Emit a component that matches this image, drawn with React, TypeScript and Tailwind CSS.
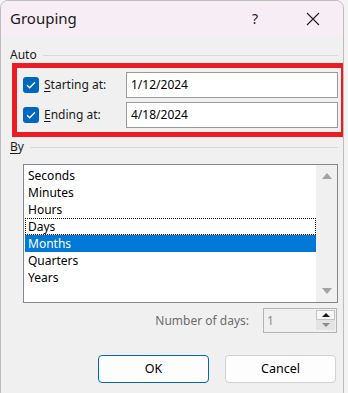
const font = { fontFamily: '"Segoe UI", "Noto Sans", "Liberation Sans", sans-serif' };

function Check() {
  return (
    <div className="w-[16px] h-[16px] rounded-[3px] bg-[#0067c0] flex items-center justify-center shrink-0">
      <svg width="10" height="8" viewBox="0 0 10 8">
        <path d="M1 4.2 L3.7 6.8 L9 1.3" fill="none" stroke="white" strokeWidth="1.3" />
      </svg>
    </div>
  );
}

function DateRow({ label, hot, value }: { label: string; hot: string; value: string }) {
  return (
    <div className="flex items-center h-[26px]">
      <Check />
      <div className="w-[87px] pl-[5px] text-[12px] text-[#1a1a1a]">
        <span className="underline underline-offset-2">{hot}</span>
        {label}
      </div>
      <div className="flex-1 h-[26px] border border-[#9b9b9b] bg-white flex items-center pl-[4px] text-[12px] text-black">
        {value}
      </div>
    </div>
  );
}

const items = ['Seconds', 'Minutes', 'Hours', 'Days', 'Months', 'Quarters', 'Years'];

export default function App() {
  return (
    <div className="w-[348px] h-[393px] bg-[#f3f3f3] overflow-hidden" style={font}>
      <div className="w-[344px] h-[400px] rounded-lg border border-[#bdbdbd] bg-[#f0f0f0] overflow-hidden flex flex-col">
        <div className="h-[35px] bg-[#f6edf5] flex items-center pl-[9px] text-[15px] text-[#1a1a1a]">
          <span className="flex-1">Grouping</span>
          <span className="w-[20px] text-center text-[14px]">?</span>
          <div className="w-[78px] flex justify-center pl-[18px]">
            <svg width="14" height="14" viewBox="0 0 14 14">
              <path d="M1 1 L13 13 M13 1 L1 13" stroke="#222" strokeWidth="1.1" />
            </svg>
          </div>
        </div>

        <div className="flex items-center mt-[11px] pl-[9px] pr-[5px] h-[16px] text-[12px] text-[#1a1a1a]">
          <span>Auto</span>
          <div className="flex-1 h-px bg-[#d9d9d9] ml-[6px]" />
        </div>

        <div className="ml-[11px] w-[334px] border-[5px] border-[#ec1c24] pl-[6px] pr-[3px] py-[4px] flex flex-col gap-[4px]">
          <DateRow hot="S" label="tarting at:" value="1/12/2024" />
          <DateRow hot="E" label="nding at:" value="4/18/2024" />
        </div>

        <div className="flex items-center mt-[2px] pl-[9px] pr-[5px] h-[16px] text-[12px] text-[#1a1a1a]">
          <span>
            <span className="underline underline-offset-2">B</span>y
          </span>
          <div className="flex-1 h-px bg-[#d9d9d9] ml-[6px]" />
        </div>

        <div className="ml-[22px] mt-[9px] w-[315px] h-[139px] border border-[#828790] bg-white flex">
          <div className="flex-1 pl-px pt-[2px]">
            {items.map((it) => (
              <div
                key={it}
                className={
                  it === 'Months'
                    ? 'h-[17px] flex items-center pl-[3px] text-[12px] bg-[#0078d7] text-white'
                    : it === 'Days'
                    ? 'h-[17px] flex items-center pl-[2px] text-[12px] text-black border border-dotted border-black'
                    : 'h-[17px] flex items-center pl-[3px] text-[12px] text-black'
                }
              >
                {it}
              </div>
            ))}
          </div>
          <div className="w-[21px] bg-[#f0f0f0] flex flex-col items-center justify-between py-[8px]">
            <svg width="10" height="6" viewBox="0 0 10 6">
              <path d="M5 0 L10 6 L0 6 Z" fill="#a3a3a3" />
            </svg>
            <svg width="10" height="6" viewBox="0 0 10 6">
              <path d="M0 0 L10 0 L5 6 Z" fill="#a3a3a3" />
            </svg>
          </div>
        </div>

        <div className="flex items-center justify-end mt-[5px] pr-[6px] h-[25px]">
          <span className="text-[12px] text-[#6d6d6d] mr-[14px]">Number of days:</span>
          <div className="w-[74px] h-[25px] border border-[#b4b4b4] bg-[#f0f0f0] flex items-center">
            <span className="flex-1 pl-[3px] text-[12px] text-[#8a8a8a]">1</span>
            <div className="w-[19px] h-[21px] mr-px flex flex-col">
              <div className="h-[10px] border border-[#c4c4c4] bg-[#f7f7f7] flex items-center justify-center">
                <svg width="8" height="4" viewBox="0 0 8 4">
                  <path d="M4 0 L8 4 L0 4 Z" fill="#1a1a1a" />
                </svg>
              </div>
              <div className="h-[10px] bg-[#e3e3e3] flex items-center justify-center">
                <svg width="8" height="4" viewBox="0 0 8 4">
                  <path d="M0 0 L8 0 L4 4 Z" fill="#8a8a8a" />
                </svg>
              </div>
            </div>
          </div>
        </div>

        <div className="flex justify-end gap-[16px] mt-[22px] pr-[7px]">
          <button className="w-[111px] h-[28px] rounded-[4px] border border-[#0067c0] bg-[#fdfdfd] text-[12.5px] text-black">
            OK
          </button>
          <button className="w-[111px] h-[28px] rounded-[4px] border border-[#d1d1d1] bg-[#fdfdfd] text-[12.5px] text-black">
            Cancel
          </button>
        </div>
      </div>
    </div>
  );
}
